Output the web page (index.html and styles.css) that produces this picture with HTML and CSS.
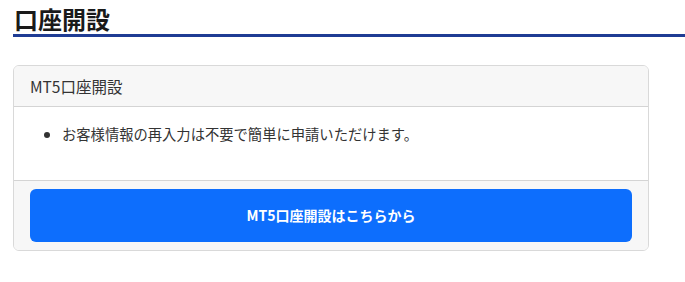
FILE: index.html
```html
<!DOCTYPE html>
<html lang="ja">
<head>
  <meta charset="UTF-8">
  <meta name="viewport" content="width=device-width, initial-scale=1.0">
  <title>口座開設</title>
  <link rel="stylesheet" href="styles.css">
</head>
<body>
  <div class="page">
    <h2 class="page-title">口座開設</h2>
    <div class="card">
      <div class="card-header">MT5口座開設</div>
      <div class="card-body">
        <ul class="notes">
          <li>お客様情報の再入力は不要で簡単に申請いただけます。</li>
        </ul>
      </div>
      <div class="card-footer">
        <a class="btn-primary" href="#">MT5口座開設はこちらから</a>
      </div>
    </div>
  </div>
</body>
</html>
```

FILE: styles.css
```css
body {
  margin: 0;
  background: #ffffff;
  font-family: "Noto Sans CJK JP", "Noto Sans", sans-serif;
  color: #212529;
}

.page {
  padding: 4px 0 0 13px;
}

.page-title {
  margin: 0 0 28px;
  padding-left: 1px;
  font-size: 24px;
  font-weight: bold;
  line-height: 30px;
  color: #1a1a1a;
  border-bottom: 3px solid #1f3c94;
}

.card {
  width: 634px;
  border: 1px solid #d9d9d9;
  border-radius: 6px;
  overflow: hidden;
}

.card-header {
  padding: 0 16px;
  height: 40px;
  line-height: 40px;
  font-size: 15.5px;
  color: #333;
  background: #f7f7f7;
  border-bottom: 1px solid #d4d4d4;
}

.card-body {
  padding: 16px 16px 36px;
  background: #ffffff;
}

.notes {
  margin: 0;
  padding-left: 32px;
  font-size: 14.3px;
  line-height: 21px;
  color: #333;
}

.card-footer {
  padding: 8px 16px;
  background: #f7f7f7;
  border-top: 1px solid #d4d4d4;
}

.btn-primary {
  display: block;
  height: 53px;
  line-height: 53px;
  text-align: center;
  font-size: 14px;
  font-weight: bold;
  color: #ffffff;
  text-decoration: none;
  background: #0d6efd;
  border-radius: 6px;
}
```
